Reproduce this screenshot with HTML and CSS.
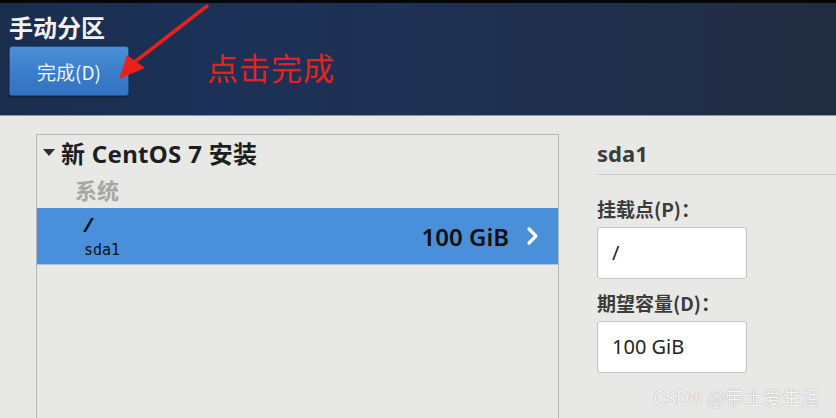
FILE: index.html
```html
<!DOCTYPE html>
<html lang="zh-CN">
<head>
    <meta charset="UTF-8">
    <title>手动分区</title>
    <link rel="stylesheet" href="styles.css">
</head>
<body>
    <header class="topbar">
        <h1 class="title">手动分区</h1>
        <div class="topbar-row">
            <button class="done-btn">完成(D)</button>
            <span class="hint">点击完成</span>
        </div>
        <!-- red annotation arrow -->
        <svg class="arrow" width="220" height="100" viewBox="0 0 220 100">
            <path d="M207 6 L136 61" stroke="#e8211c" stroke-width="3.5" stroke-linecap="round" fill="none"/>
            <polygon points="119,79 127,55 145,68" fill="#e8211c"/>
        </svg>
    </header>

    <main class="content">
        <section class="tree">
            <div class="tree-head">
                <span class="caret"></span>
                <span>新 CentOS 7 安装</span>
            </div>
            <div class="tree-group">系统</div>
            <div class="tree-row selected">
                <div class="row-names">
                    <span class="mount">/</span>
                    <span class="device">sda1</span>
                </div>
                <span class="size">100 GiB</span>
                <svg class="chevron" width="14" height="20" viewBox="0 0 14 20">
                    <path d="M3 3 L10 10 L3 17" stroke="#fff" stroke-width="3.2" fill="none" stroke-linecap="round" stroke-linejoin="round"/>
                </svg>
            </div>
        </section>

        <section class="detail">
            <h2 class="detail-title">sda1</h2>
            <label class="field-label">挂载点(P)：</label>
            <div class="field-box">/</div>
            <label class="field-label">期望容量(D)：</label>
            <div class="field-box">100 GiB</div>
        </section>
    </main>

    <div class="watermark">CSDN @带土爱生活</div>
</body>
</html>
```

FILE: styles.css
```css
/* Anaconda manual partitioning screen */
body {
    margin: 0;
    width: 836px;
    height: 418px;
    overflow: hidden;
    position: relative;
    background-color: #e8e8e7;
    font-family: "Noto Sans", "Noto Sans CJK SC", sans-serif;
    color: #2e3436;
}

/* Header bar */
.topbar {
    position: relative;
    height: 112px;
    border-top: 3px solid #050608;
    border-bottom: 1px solid #8a98ac;
    padding-left: 9px;
    box-sizing: content-box;
    background: linear-gradient(90deg, #1b2d4d 0%, #1c3157 25%, #1f3052 55%, #222c40 100%);
}

.title {
    margin: 0;
    padding-top: 10px;
    font-size: 24px;
    line-height: 28px;
    font-weight: 700;
    color: #f2f2f2;
    font-family: "Noto Sans CJK SC", sans-serif;
}

.topbar-row {
    display: flex;
    align-items: center;
    margin-top: 5px;
}

.done-btn {
    width: 120px;
    height: 50px;
    border: 1px solid #1d4f8c;
    border-radius: 3px;
    background: linear-gradient(180deg, #4b8fd8 0%, #3a7dcb 55%, #3372c0 100%);
    color: #eef3fa;
    font-family: "Noto Sans CJK SC", sans-serif;
    font-size: 19px;
    padding: 0;
    box-shadow: 0 1px 2px rgba(0, 0, 0, 0.4);
}

.hint {
    margin-left: 78px;
    margin-top: -10px;
    color: #e8211c;
    font-family: "Noto Sans CJK SC", sans-serif;
    font-size: 31px;
    letter-spacing: 1px;
}

.arrow {
    position: absolute;
    left: 0;
    top: -3px;
}

/* Main area */
.content {
    display: flex;
    padding-top: 18px;
}

.tree {
    margin-left: 36px;
    width: 521px;
    height: 300px;
    border: 1px solid #b6b6b4;
    border-bottom: none;
}

.tree-head {
    display: flex;
    align-items: center;
    height: 34px;
    padding-left: 6px;
    font-size: 24px;
    font-weight: 700;
    letter-spacing: 0.3px;
    color: #1e1e1e;
}

.caret {
    width: 0;
    height: 0;
    border-left: 6px solid transparent;
    border-right: 6px solid transparent;
    border-top: 7px solid #2e2e2e;
    margin-right: 6px;
}

.tree-group {
    height: 39px;
    line-height: 40px;
    padding-left: 38px;
    font-size: 22px;
    font-weight: 700;
    color: #a6a6a4;
    font-family: "Noto Sans CJK SC", sans-serif;
}

.tree-row {
    display: flex;
    align-items: center;
    height: 56px;
    padding-left: 47px;
    padding-right: 18px;
    border-bottom: 1px solid #a9c6ea;
}

.selected {
    background-color: #4a8fd9;
}

.row-names {
    display: flex;
    flex-direction: column;
    flex: 1;
}

.mount {
    font-size: 20px;
    font-weight: 700;
    line-height: 22px;
    color: #111;
    font-style: italic;
}

.device {
    margin-top: 5px;
    font-family: "DejaVu Sans Mono", monospace;
    font-size: 15px;
    color: #111;
}

.size {
    font-size: 24px;
    font-weight: 600;
    color: #111;
    margin-right: 17px;
}

/* Detail column */
.detail {
    margin-left: 38px;
    flex: 1;
}

.detail-title {
    margin: 0;
    padding-top: 4px;
    height: 36px;
    font-size: 22px;
    font-weight: 700;
    color: #3c3c3c;
    border-bottom: 1px solid #c8c8c6;
}

.field-label {
    display: block;
    margin-top: 21px;
    font-size: 19px;
    font-weight: 700;
    color: #3c3c3c;
    font-family: "Noto Sans CJK SC", sans-serif;
    line-height: 26px;
}

.field-label + .field-box {
    margin-top: 5px;
}

.field-box {
    width: 150px;
    height: 52px;
    box-sizing: border-box;
    background: #fff;
    border: 1px solid #c4c4c2;
    border-radius: 3px;
    padding-left: 14px;
    line-height: 50px;
    font-size: 20px;
    color: #222;
}

.field-box + .field-label {
    margin-top: 11px;
}

.watermark {
    position: absolute;
    right: 16px;
    bottom: 8px;
    font-size: 19px;
    color: #f6f6f6;
    text-shadow: 0 0 1px #888;
    font-family: "Noto Sans CJK SC", sans-serif;
}
```
